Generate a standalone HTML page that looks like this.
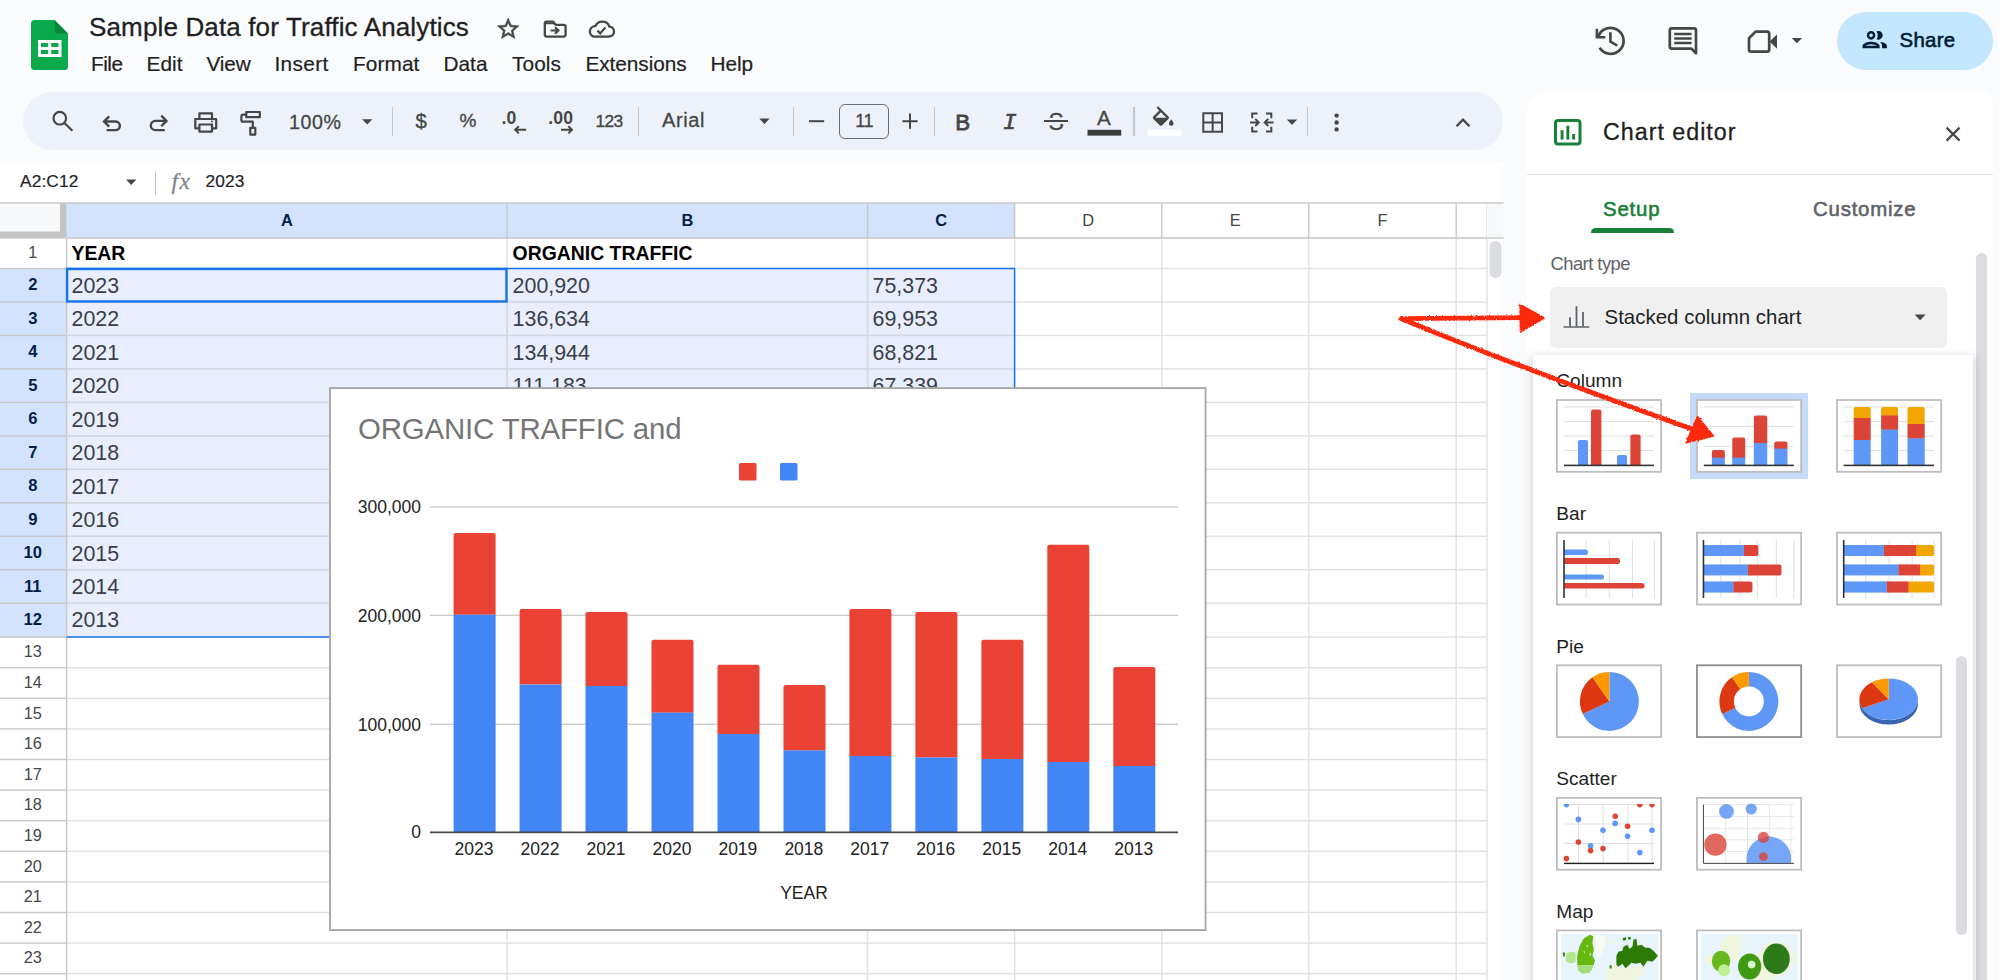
<!DOCTYPE html><html><head><meta charset="utf-8"><title>Sample Data for Traffic Analytics</title><style>
*{box-sizing:border-box;margin:0;padding:0}
html,body{width:1999px;height:980px;overflow:hidden;background:#f9fbfd;font-family:"Liberation Sans",sans-serif}
.a{position:absolute}
.t{position:absolute;white-space:nowrap;line-height:40px}
svg{position:absolute;overflow:visible}
#root{position:relative;width:1999px;height:980px;overflow:hidden}
</style></head><body><div id="root">
<svg style="left:31px;top:20px" width="37" height="50" viewBox="0 0 37 50">
<path d="M3.5 0H23.5L37 13.5V46.5Q37 50 33.5 50H3.5Q0 50 0 46.5V3.5Q0 0 3.5 0Z" fill="#0aa94c"/>
<path d="M23.5 0L37 13.5H27Q23.5 13.5 23.5 10Z" fill="#07883c"/>
<path d="M7 20H30.5V37H7Z M10 23V27H17.2V23Z M20.2 23V27H27.5V23Z M10 30V34H17.2V30Z M20.2 30V34H27.5V30Z" fill="#fff" fill-rule="evenodd"/>
</svg>
<span class="t" style="left:89.00px;top:7px;font-size:26px;color:#1f1f1f;-webkit-text-stroke:0.3px #1f1f1f;letter-spacing:0.144px;">Sample Data for Traffic Analytics</span>
<span class="t" style="left:91.00px;top:44px;font-size:20.8px;color:#1f1f1f;-webkit-text-stroke:0.2px #1f1f1f;letter-spacing:-0.504px;">File</span>
<span class="t" style="left:146.50px;top:44px;font-size:20.8px;color:#1f1f1f;-webkit-text-stroke:0.2px #1f1f1f;letter-spacing:0.040px;">Edit</span>
<span class="t" style="left:206.50px;top:44px;font-size:20.8px;color:#1f1f1f;-webkit-text-stroke:0.2px #1f1f1f;letter-spacing:-0.177px;">View</span>
<span class="t" style="left:274.50px;top:44px;font-size:20.8px;color:#1f1f1f;-webkit-text-stroke:0.2px #1f1f1f;letter-spacing:0.330px;">Insert</span>
<span class="t" style="left:353.00px;top:44px;font-size:20.8px;color:#1f1f1f;-webkit-text-stroke:0.2px #1f1f1f;letter-spacing:0.104px;">Format</span>
<span class="t" style="left:443.50px;top:44px;font-size:20.8px;color:#1f1f1f;-webkit-text-stroke:0.2px #1f1f1f;letter-spacing:0.016px;">Data</span>
<span class="t" style="left:512.00px;top:44px;font-size:20.8px;color:#1f1f1f;-webkit-text-stroke:0.2px #1f1f1f;letter-spacing:0.089px;">Tools</span>
<span class="t" style="left:585.50px;top:44px;font-size:20.8px;color:#1f1f1f;-webkit-text-stroke:0.2px #1f1f1f;letter-spacing:-0.075px;">Extensions</span>
<span class="t" style="left:710.50px;top:44px;font-size:20.8px;color:#1f1f1f;-webkit-text-stroke:0.2px #1f1f1f;letter-spacing:-0.070px;">Help</span>
<div class="a" style="left:23px;top:92px;width:1480px;height:58px;background:#edf2fa;border-radius:29px;"></div>
<div class="a" style="left:391.8px;top:107px;width:1.4px;height:28.5px;background:#c7c7c7;"></div>
<div class="a" style="left:637.8px;top:107px;width:1.4px;height:28.5px;background:#c7c7c7;"></div>
<div class="a" style="left:792.8px;top:107px;width:1.4px;height:28.5px;background:#c7c7c7;"></div>
<div class="a" style="left:933.8px;top:107px;width:1.4px;height:28.5px;background:#c7c7c7;"></div>
<div class="a" style="left:1133.3px;top:107px;width:1.4px;height:28.5px;background:#c7c7c7;"></div>
<div class="a" style="left:1306.8px;top:107px;width:1.4px;height:28.5px;background:#c7c7c7;"></div>
<span class="t" style="left:289.00px;top:102px;font-size:19.6px;color:#444746;-webkit-text-stroke:0.3px #444746;letter-spacing:0.593px;">100%</span>
<span class="t" style="left:662.00px;top:100px;font-size:20px;color:#444746;-webkit-text-stroke:0.3px #444746;letter-spacing:0.598px;">Arial</span>
<span class="t" style="left:595.50px;top:101px;font-size:17.4px;color:#444746;-webkit-text-stroke:0.35px #444746;letter-spacing:-0.677px;">123</span>
<div class="a" style="left:839px;top:103.5px;width:49.5px;height:35px;background:transparent;border:1.6px solid #6b6e6c;border-radius:6px;"></div>
<span class="t" style="left:855.30px;top:101px;font-size:18px;color:#444746;-webkit-text-stroke:0.3px #444746;letter-spacing:-0.543px;">11</span>
<div class="a" style="left:0px;top:161.5px;width:1503px;height:42px;background:#fff;"></div>
<span class="t" style="left:20.00px;top:161px;font-size:17.3px;color:#1f1f1f;-webkit-text-stroke:0.2px #1f1f1f;letter-spacing:0.133px;">A2:C12</span>
<div class="a" style="left:154.6px;top:171px;width:1.4px;height:23.5px;background:#c7c7c7;"></div>
<span class="t" style="left:171.50px;top:161px;font-size:23.5px;color:#80868b;font-style:italic;font-family:'Liberation Serif',serif;-webkit-text-stroke:0.3px #80868b;letter-spacing:1.520px;">fx</span>
<span class="t" style="left:205.50px;top:161px;font-size:17.3px;color:#1f1f1f;-webkit-text-stroke:0.2px #1f1f1f;letter-spacing:0.128px;">2023</span>
<svg style="left:0;top:0" width="1999" height="980" viewBox="0 0 1999 980"><rect x="0.00" y="203.00" width="1503.00" height="777.00" fill="#fff"/><rect x="66.60" y="203.00" width="948.00" height="35.00" fill="#d3e3fd"/><rect x="0.00" y="268.50" width="66.60" height="368.60" fill="#d3e3fd"/><rect x="66.60" y="268.50" width="948.00" height="368.60" fill="#e8eefc"/><rect x="0.00" y="203.00" width="60.00" height="28.50" fill="#f8f9fa"/><rect x="60.00" y="203.00" width="6.60" height="35.00" fill="#c4c4c4"/><rect x="0.00" y="231.50" width="66.60" height="6.50" fill="#c4c4c4"/><rect x="66.60" y="237.30" width="1420.40" height="1.40" fill="#e1e1e1"/><rect x="0.00" y="237.30" width="66.60" height="1.40" fill="#c6c8c8"/><rect x="66.60" y="267.80" width="1420.40" height="1.40" fill="#e1e1e1"/><rect x="0.00" y="267.80" width="66.60" height="1.40" fill="#c6c8c8"/><rect x="66.60" y="301.27" width="1420.40" height="1.40" fill="#e1e1e1"/><rect x="0.00" y="301.27" width="66.60" height="1.40" fill="#c6c8c8"/><rect x="66.60" y="334.74" width="1420.40" height="1.40" fill="#e1e1e1"/><rect x="0.00" y="334.74" width="66.60" height="1.40" fill="#c6c8c8"/><rect x="66.60" y="368.21" width="1420.40" height="1.40" fill="#e1e1e1"/><rect x="0.00" y="368.21" width="66.60" height="1.40" fill="#c6c8c8"/><rect x="66.60" y="401.68" width="1420.40" height="1.40" fill="#e1e1e1"/><rect x="0.00" y="401.68" width="66.60" height="1.40" fill="#c6c8c8"/><rect x="66.60" y="435.15" width="1420.40" height="1.40" fill="#e1e1e1"/><rect x="0.00" y="435.15" width="66.60" height="1.40" fill="#c6c8c8"/><rect x="66.60" y="468.62" width="1420.40" height="1.40" fill="#e1e1e1"/><rect x="0.00" y="468.62" width="66.60" height="1.40" fill="#c6c8c8"/><rect x="66.60" y="502.09" width="1420.40" height="1.40" fill="#e1e1e1"/><rect x="0.00" y="502.09" width="66.60" height="1.40" fill="#c6c8c8"/><rect x="66.60" y="535.56" width="1420.40" height="1.40" fill="#e1e1e1"/><rect x="0.00" y="535.56" width="66.60" height="1.40" fill="#c6c8c8"/><rect x="66.60" y="569.03" width="1420.40" height="1.40" fill="#e1e1e1"/><rect x="0.00" y="569.03" width="66.60" height="1.40" fill="#c6c8c8"/><rect x="66.60" y="602.50" width="1420.40" height="1.40" fill="#e1e1e1"/><rect x="0.00" y="602.50" width="66.60" height="1.40" fill="#c6c8c8"/><rect x="66.60" y="636.40" width="1420.40" height="1.40" fill="#e1e1e1"/><rect x="0.00" y="636.40" width="66.60" height="1.40" fill="#c6c8c8"/><rect x="66.60" y="667.00" width="1420.40" height="1.40" fill="#e1e1e1"/><rect x="0.00" y="667.00" width="66.60" height="1.40" fill="#c6c8c8"/><rect x="66.60" y="697.60" width="1420.40" height="1.40" fill="#e1e1e1"/><rect x="0.00" y="697.60" width="66.60" height="1.40" fill="#c6c8c8"/><rect x="66.60" y="728.20" width="1420.40" height="1.40" fill="#e1e1e1"/><rect x="0.00" y="728.20" width="66.60" height="1.40" fill="#c6c8c8"/><rect x="66.60" y="758.80" width="1420.40" height="1.40" fill="#e1e1e1"/><rect x="0.00" y="758.80" width="66.60" height="1.40" fill="#c6c8c8"/><rect x="66.60" y="789.40" width="1420.40" height="1.40" fill="#e1e1e1"/><rect x="0.00" y="789.40" width="66.60" height="1.40" fill="#c6c8c8"/><rect x="66.60" y="820.00" width="1420.40" height="1.40" fill="#e1e1e1"/><rect x="0.00" y="820.00" width="66.60" height="1.40" fill="#c6c8c8"/><rect x="66.60" y="850.60" width="1420.40" height="1.40" fill="#e1e1e1"/><rect x="0.00" y="850.60" width="66.60" height="1.40" fill="#c6c8c8"/><rect x="66.60" y="881.20" width="1420.40" height="1.40" fill="#e1e1e1"/><rect x="0.00" y="881.20" width="66.60" height="1.40" fill="#c6c8c8"/><rect x="66.60" y="911.80" width="1420.40" height="1.40" fill="#e1e1e1"/><rect x="0.00" y="911.80" width="66.60" height="1.40" fill="#c6c8c8"/><rect x="66.60" y="942.40" width="1420.40" height="1.40" fill="#e1e1e1"/><rect x="0.00" y="942.40" width="66.60" height="1.40" fill="#c6c8c8"/><rect x="66.60" y="973.00" width="1420.40" height="1.40" fill="#e1e1e1"/><rect x="0.00" y="973.00" width="66.60" height="1.40" fill="#c6c8c8"/><rect x="66.60" y="1003.60" width="1420.40" height="1.40" fill="#e1e1e1"/><rect x="0.00" y="1003.60" width="66.60" height="1.40" fill="#c6c8c8"/><rect x="506.30" y="238.00" width="1.40" height="742.00" fill="#e1e1e1"/><rect x="506.30" y="203.00" width="1.40" height="35.00" fill="#c6c8c8"/><rect x="866.90" y="238.00" width="1.40" height="742.00" fill="#e1e1e1"/><rect x="866.90" y="203.00" width="1.40" height="35.00" fill="#c6c8c8"/><rect x="1013.90" y="238.00" width="1.40" height="742.00" fill="#e1e1e1"/><rect x="1013.90" y="203.00" width="1.40" height="35.00" fill="#c6c8c8"/><rect x="1161.10" y="238.00" width="1.40" height="742.00" fill="#e1e1e1"/><rect x="1161.10" y="203.00" width="1.40" height="35.00" fill="#c6c8c8"/><rect x="1308.10" y="238.00" width="1.40" height="742.00" fill="#e1e1e1"/><rect x="1308.10" y="203.00" width="1.40" height="35.00" fill="#c6c8c8"/><rect x="1455.50" y="238.00" width="1.40" height="742.00" fill="#e1e1e1"/><rect x="1455.50" y="203.00" width="1.40" height="35.00" fill="#c6c8c8"/><rect x="65.90" y="238.00" width="1.40" height="742.00" fill="#c6c8c8"/><rect x="1486.30" y="203.00" width="1.40" height="777.00" fill="#e1e1e1"/><rect x="1487.00" y="203.00" width="16.50" height="35.00" fill="#f8f9fa"/><rect x="0.00" y="202.30" width="1503.50" height="1.40" fill="#c6c8c8"/><rect x="66.60" y="237.30" width="1436.90" height="1.40" fill="#c6c8c8"/><rect x="66.60" y="301.27" width="948.00" height="1.40" fill="#d3d7e3"/><rect x="66.60" y="334.74" width="948.00" height="1.40" fill="#d3d7e3"/><rect x="66.60" y="368.21" width="948.00" height="1.40" fill="#d3d7e3"/><rect x="66.60" y="401.68" width="948.00" height="1.40" fill="#d3d7e3"/><rect x="66.60" y="435.15" width="948.00" height="1.40" fill="#d3d7e3"/><rect x="66.60" y="468.62" width="948.00" height="1.40" fill="#d3d7e3"/><rect x="66.60" y="502.09" width="948.00" height="1.40" fill="#d3d7e3"/><rect x="66.60" y="535.56" width="948.00" height="1.40" fill="#d3d7e3"/><rect x="66.60" y="569.03" width="948.00" height="1.40" fill="#d3d7e3"/><rect x="66.60" y="602.50" width="948.00" height="1.40" fill="#d3d7e3"/><rect x="506.30" y="268.50" width="1.40" height="368.60" fill="#d3d7e3"/><rect x="866.90" y="268.50" width="1.40" height="368.60" fill="#d3d7e3"/><path d="M66.6 268.5H1014.6V637.10H66.6" fill="none" stroke="#1a73e8" stroke-width="1.5"/><rect x="67.1" y="269.0" width="439.40" height="32.47" fill="none" stroke="#1a73e8" stroke-width="2.4"/><rect x="1489.5" y="241" width="12" height="37" rx="6" fill="#dadce0"/></svg>
<span class="t" style="left:280.88px;top:200px;font-size:16.4px;color:#041e49;font-weight:700;">A</span>
<span class="t" style="left:681.38px;top:200px;font-size:16.4px;color:#041e49;font-weight:700;">B</span>
<span class="t" style="left:935.18px;top:200px;font-size:16.4px;color:#041e49;font-weight:700;">C</span>
<span class="t" style="left:1082.28px;top:200px;font-size:16.4px;color:#444746;">D</span>
<span class="t" style="left:1229.83px;top:200px;font-size:16.4px;color:#444746;">E</span>
<span class="t" style="left:1377.49px;top:200px;font-size:16.4px;color:#444746;">F</span>
<span class="t" style="left:28.27px;top:232px;font-size:16.3px;color:#444746;">1</span>
<span class="t" style="left:28.18px;top:265px;font-size:16.6px;color:#041e49;font-weight:700;">2</span>
<span class="t" style="left:28.18px;top:299px;font-size:16.6px;color:#041e49;font-weight:700;">3</span>
<span class="t" style="left:28.18px;top:332px;font-size:16.6px;color:#041e49;font-weight:700;">4</span>
<span class="t" style="left:28.18px;top:366px;font-size:16.6px;color:#041e49;font-weight:700;">5</span>
<span class="t" style="left:28.18px;top:399px;font-size:16.6px;color:#041e49;font-weight:700;">6</span>
<span class="t" style="left:28.18px;top:433px;font-size:16.6px;color:#041e49;font-weight:700;">7</span>
<span class="t" style="left:28.18px;top:466px;font-size:16.6px;color:#041e49;font-weight:700;">8</span>
<span class="t" style="left:28.18px;top:500px;font-size:16.6px;color:#041e49;font-weight:700;">9</span>
<span class="t" style="left:23.57px;top:533px;font-size:16.6px;color:#041e49;font-weight:700;">10</span>
<span class="t" style="left:24.03px;top:567px;font-size:16.6px;color:#041e49;font-weight:700;">11</span>
<span class="t" style="left:23.57px;top:600px;font-size:16.6px;color:#041e49;font-weight:700;">12</span>
<span class="t" style="left:23.73px;top:631px;font-size:16.3px;color:#444746;">13</span>
<span class="t" style="left:23.73px;top:662px;font-size:16.3px;color:#444746;">14</span>
<span class="t" style="left:23.73px;top:693px;font-size:16.3px;color:#444746;">15</span>
<span class="t" style="left:23.73px;top:723px;font-size:16.3px;color:#444746;">16</span>
<span class="t" style="left:23.73px;top:754px;font-size:16.3px;color:#444746;">17</span>
<span class="t" style="left:23.73px;top:784px;font-size:16.3px;color:#444746;">18</span>
<span class="t" style="left:23.73px;top:815px;font-size:16.3px;color:#444746;">19</span>
<span class="t" style="left:23.73px;top:846px;font-size:16.3px;color:#444746;">20</span>
<span class="t" style="left:23.73px;top:876px;font-size:16.3px;color:#444746;">21</span>
<span class="t" style="left:23.73px;top:907px;font-size:16.3px;color:#444746;">22</span>
<span class="t" style="left:23.73px;top:937px;font-size:16.3px;color:#444746;">23</span>
<span class="t" style="left:71.50px;top:233px;font-size:19.4px;color:#000;font-weight:700;">YEAR</span>
<span class="t" style="left:512.60px;top:233px;font-size:19.4px;color:#000;font-weight:700;">ORGANIC TRAFFIC</span>
<span class="t" style="left:71.50px;top:266px;font-size:21.4px;color:#3a3f4a;">2023</span>
<span class="t" style="left:512.60px;top:266px;font-size:21.4px;color:#3a3f4a;">200,920</span>
<span class="t" style="left:872.50px;top:266px;font-size:21.4px;color:#3a3f4a;">75,373</span>
<span class="t" style="left:71.50px;top:299px;font-size:21.4px;color:#3a3f4a;">2022</span>
<span class="t" style="left:512.60px;top:299px;font-size:21.4px;color:#3a3f4a;">136,634</span>
<span class="t" style="left:872.50px;top:299px;font-size:21.4px;color:#3a3f4a;">69,953</span>
<span class="t" style="left:71.50px;top:333px;font-size:21.4px;color:#3a3f4a;">2021</span>
<span class="t" style="left:512.60px;top:333px;font-size:21.4px;color:#3a3f4a;">134,944</span>
<span class="t" style="left:872.50px;top:333px;font-size:21.4px;color:#3a3f4a;">68,821</span>
<span class="t" style="left:71.50px;top:366px;font-size:21.4px;color:#3a3f4a;">2020</span>
<span class="t" style="left:512.60px;top:366px;font-size:21.4px;color:#3a3f4a;">111,183</span>
<span class="t" style="left:872.50px;top:366px;font-size:21.4px;color:#3a3f4a;">67,339</span>
<span class="t" style="left:71.50px;top:400px;font-size:21.4px;color:#3a3f4a;">2019</span>
<span class="t" style="left:71.50px;top:433px;font-size:21.4px;color:#3a3f4a;">2018</span>
<span class="t" style="left:71.50px;top:467px;font-size:21.4px;color:#3a3f4a;">2017</span>
<span class="t" style="left:71.50px;top:500px;font-size:21.4px;color:#3a3f4a;">2016</span>
<span class="t" style="left:71.50px;top:534px;font-size:21.4px;color:#3a3f4a;">2015</span>
<span class="t" style="left:71.50px;top:567px;font-size:21.4px;color:#3a3f4a;">2014</span>
<span class="t" style="left:71.50px;top:600px;font-size:21.4px;color:#3a3f4a;">2013</span>
<svg style="left:0;top:0" width="1999" height="980" viewBox="0 0 1999 980"><rect x="330.02" y="388.12" width="875.55" height="541.95" fill="#fff" stroke="#a6a6a6" stroke-width="1.85"/><rect x="430" y="506.3" width="748" height="1.4" fill="#cccccc"/><rect x="430" y="614.5999999999999" width="748" height="1.4" fill="#cccccc"/><rect x="430" y="723.5999999999999" width="748" height="1.4" fill="#cccccc"/><path d="M453.6 614.7V535.0Q453.6 533.0 455.6 533.0H493.6Q495.6 533.0 495.6 535.0V614.7Z" fill="#ea4335"/><rect x="453.6" y="614.7" width="42" height="217.3" fill="#4285f4"/><path d="M519.6 684.6V611.0Q519.6 609.0 521.6 609.0H559.6Q561.6 609.0 561.6 611.0V684.6Z" fill="#ea4335"/><rect x="519.6" y="684.6" width="42" height="147.4" fill="#4285f4"/><path d="M585.5 686.0V614.0Q585.5 612.0 587.5 612.0H625.5Q627.5 612.0 627.5 614.0V686.0Z" fill="#ea4335"/><rect x="585.5" y="686.0" width="42" height="146.0" fill="#4285f4"/><path d="M651.5 712.7V641.7Q651.5 639.7 653.5 639.7H691.5Q693.5 639.7 693.5 641.7V712.7Z" fill="#ea4335"/><rect x="651.5" y="712.7" width="42" height="119.3" fill="#4285f4"/><path d="M717.5 734.0V666.7Q717.5 664.7 719.5 664.7H757.5Q759.5 664.7 759.5 666.7V734.0Z" fill="#ea4335"/><rect x="717.5" y="734.0" width="42" height="98.0" fill="#4285f4"/><path d="M783.5 750.4V687.0Q783.5 685.0 785.5 685.0H823.5Q825.5 685.0 825.5 687.0V750.4Z" fill="#ea4335"/><rect x="783.5" y="750.4" width="42" height="81.6" fill="#4285f4"/><path d="M849.4 756.0V611.0Q849.4 609.0 851.4 609.0H889.4Q891.4 609.0 891.4 611.0V756.0Z" fill="#ea4335"/><rect x="849.4" y="756.0" width="42" height="76.0" fill="#4285f4"/><path d="M915.4 757.5V614.0Q915.4 612.0 917.4 612.0H955.4Q957.4 612.0 957.4 614.0V757.5Z" fill="#ea4335"/><rect x="915.4" y="757.5" width="42" height="74.5" fill="#4285f4"/><path d="M981.4 759.0V641.7Q981.4 639.7 983.4 639.7H1021.4Q1023.4 639.7 1023.4 641.7V759.0Z" fill="#ea4335"/><rect x="981.4" y="759.0" width="42" height="73.0" fill="#4285f4"/><path d="M1047.3 762.0V546.8Q1047.3 544.8 1049.3 544.8H1087.3Q1089.3 544.8 1089.3 546.8V762.0Z" fill="#ea4335"/><rect x="1047.3" y="762.0" width="42" height="70.0" fill="#4285f4"/><path d="M1113.3 766.0V669.0Q1113.3 667.0 1115.3 667.0H1153.3Q1155.3 667.0 1155.3 669.0V766.0Z" fill="#ea4335"/><rect x="1113.3" y="766.0" width="42" height="66.0" fill="#4285f4"/><rect x="430" y="831.500" width="748" height="1.700" fill="#444"/><rect x="739" y="463" width="17.5" height="17.5" rx="1.5" fill="#ea4335"/><rect x="780" y="463" width="17.5" height="17.5" rx="1.5" fill="#4285f4"/></svg>
<span class="t" style="left:358.00px;top:409px;font-size:29.4px;color:#757575;letter-spacing:-0.141px;">ORGANIC TRAFFIC and</span>
<span class="t" style="left:357.74px;top:487px;font-size:17.5px;color:#222;">300,000</span>
<span class="t" style="left:357.74px;top:596px;font-size:17.5px;color:#222;">200,000</span>
<span class="t" style="left:357.74px;top:705px;font-size:17.5px;color:#222;">100,000</span>
<span class="t" style="left:411.27px;top:812px;font-size:17.5px;color:#222;">0</span>
<span class="t" style="left:454.53px;top:829px;font-size:17.5px;color:#222;">2023</span>
<span class="t" style="left:520.50px;top:829px;font-size:17.5px;color:#222;">2022</span>
<span class="t" style="left:586.47px;top:829px;font-size:17.5px;color:#222;">2021</span>
<span class="t" style="left:652.44px;top:829px;font-size:17.5px;color:#222;">2020</span>
<span class="t" style="left:718.41px;top:829px;font-size:17.5px;color:#222;">2019</span>
<span class="t" style="left:784.38px;top:829px;font-size:17.5px;color:#222;">2018</span>
<span class="t" style="left:850.35px;top:829px;font-size:17.5px;color:#222;">2017</span>
<span class="t" style="left:916.32px;top:829px;font-size:17.5px;color:#222;">2016</span>
<span class="t" style="left:982.29px;top:829px;font-size:17.5px;color:#222;">2015</span>
<span class="t" style="left:1048.26px;top:829px;font-size:17.5px;color:#222;">2014</span>
<span class="t" style="left:1114.23px;top:829px;font-size:17.5px;color:#222;">2013</span>
<span class="t" style="left:780.17px;top:873px;font-size:17.5px;color:#222;">YEAR</span>
<div class="a" style="left:1836.5px;top:11.5px;width:156.5px;height:58px;background:#c2e7ff;border-radius:29px;"></div>
<span class="t" style="left:1899.50px;top:20px;font-size:20.4px;color:#001d35;-webkit-text-stroke:0.6px #001d35;letter-spacing:0.313px;">Share</span>
<div class="a" style="left:1527px;top:92px;width:466px;height:900px;background:#fff;border-radius:24px 12px 0 0;"></div>
<span class="t" style="left:1603.00px;top:112px;font-size:23.3px;color:#1f1f1f;-webkit-text-stroke:0.3px #1f1f1f;letter-spacing:0.980px;">Chart editor</span>
<div class="a" style="left:1527px;top:173.5px;width:466px;height:1.5px;background:#e3e3e3;"></div>
<span class="t" style="left:1603.00px;top:189px;font-size:20.4px;color:#188038;-webkit-text-stroke:0.6px #188038;letter-spacing:0.838px;">Setup</span>
<div class="a" style="left:1591px;top:228.3px;width:82.5px;height:4.7px;background:#188038;border-radius:4.5px 4.5px 0 0;"></div>
<span class="t" style="left:1813.00px;top:189px;font-size:20.4px;color:#5f6368;-webkit-text-stroke:0.6px #5f6368;letter-spacing:0.793px;">Customize</span>
<span class="t" style="left:1550.50px;top:244px;font-size:18.4px;color:#5f6368;letter-spacing:-0.538px;">Chart type</span>
<div class="a" style="left:1550px;top:287px;width:396.5px;height:61px;background:#f0f0f0;border-radius:6px;"></div>
<span class="t" style="left:1604.50px;top:297px;font-size:20.4px;color:#1f1f1f;letter-spacing:0.042px;">Stacked column chart</span>
<div class="a" style="left:1976px;top:252.5px;width:11px;height:740px;background:#dadce0;border-radius:6px;"></div>
<div class="a" style="left:1532.5px;top:355px;width:440px;height:640px;background:#fff;box-shadow:0 3px 9px 1px rgba(0,0,0,0.2);"></div>
<span class="t" style="left:1556.30px;top:361px;font-size:19.1px;color:#1f1f1f;">Column</span>
<span class="t" style="left:1556.30px;top:494px;font-size:19.1px;color:#1f1f1f;">Bar</span>
<span class="t" style="left:1556.30px;top:627px;font-size:19.1px;color:#1f1f1f;">Pie</span>
<span class="t" style="left:1556.30px;top:759px;font-size:19.1px;color:#1f1f1f;">Scatter</span>
<span class="t" style="left:1556.30px;top:892px;font-size:19.1px;color:#1f1f1f;">Map</span>
<div class="a" style="left:1690px;top:393.3px;width:118px;height:85.4px;background:#c6dafc;"></div>
<div class="a" style="left:1955.5px;top:656px;width:11.5px;height:279px;background:#dadce0;border-radius:6px;"></div>
<svg style="left:0;top:0" width="1999" height="980" viewBox="0 0 1999 980" fill="none" stroke-linecap="butt" stroke-linejoin="miter"><g stroke="#444746" stroke-width="2.3" stroke-linejoin="miter"><path transform="translate(495.24,15.84) scale(1.08)" stroke="#444746" stroke-width="0.5" fill="#444746" d="M22 9.24l-7.19-.62L12 2 9.19 8.63 2 9.24l5.46 4.73L5.82 21 12 17.27 18.18 21l-1.63-7.03L22 9.24zM12 15.4l-3.76 2.27 1-4.28-3.32-2.88 4.38-.38L12 6.1l1.71 4.04 4.38.38-3.32 2.88 1 4.28L12 15.4z"/><path d="M546.8 21.6H553L555.600 24.800H563.600Q565.600 24.800 565.600 26.800V34.600Q565.600 36.600 563.600 36.600H546.800Q544.800 36.600 544.800 34.600V23.600Q544.800 21.600 546.800 21.600Z" stroke-linejoin="round"/><path d="M544.800 24.300V22.500H553.500L555 24.300Z" fill="#444746" stroke="none"/><path d="M550.600 30.500H557.500M555 27.300L558.400 30.500L555 33.700" stroke-width="2.200"/><path stroke-linejoin="round" d="M595 36.600H608.500C611.800 36.600 614 34.400 614 31.600C614 28.900 612 26.800 609.300 26.600C608.500 23.600 605.700 21.600 602.300 21.600C599.300 21.600 596.700 23.200 595.600 25.800C592.500 26.100 589.900 28.400 589.900 31.400C589.900 34.300 592.200 36.600 595 36.600Z"/><path d="M597.300 30.600L600.200 33.400L605.400 27.400" stroke-width="2.200"/></g><g stroke="#444746" stroke-width="2.2"><circle cx="59.8" cy="118.2" r="6.3"/><path d="M64.4 123L72.4 130.800"/><path d="M109.2 116.3L104 121.5L109.200 126.700M104.500 121.500H115.600A4.300 4.300 0 0 1 115.600 130.100H106.600" stroke-width="2.400"/><path d="M161.300 115.700L166.500 120.900L161.300 126.100M166 120.900H155.400A4.600 4.600 0 0 0 155.400 130.100H164.800" stroke-width="2.400"/><path d="M199.400 118.500V113.400H212V118.500M199.400 128.300H195.300V119H216.200V128.300H212M199.400 124.500H212V131.600H199.400Z" stroke-linejoin="round"/><path d="M246.300 112H259.800V117.200H246.300ZM246.300 114.600H243.200Q241.400 114.600 241.400 116.400V119.900Q241.400 121.700 243.200 121.700H252.800V127.600M250.300 127.900H255.300V134.600H250.300Z" stroke-linejoin="round"/></g><circle cx="212" cy="121.500" r="1" fill="#444746"/><path d="M362 119.2H372.4L367.2 124.60000000000001Z" fill="#444746"/><path d="M759.3 118.6H769.6999999999999L764.5 124.0Z" fill="#444746"/><path d="M1286.8 119.5H1297.2L1292.0 124.9Z" fill="#444746"/><path d="M126 179.6H136.4L131.2 185.0Z" fill="#444746"/><path d="M1791.7 37.9H1802.1000000000001L1796.9 43.3Z" fill="#444746"/><path d="M1914.6 314.5H1925.6L1920.1 320.3Z" fill="#444746"/><g stroke="#444746" stroke-width="2"><path d="M526.200 129.800H515.500M518.800 126.200L515.200 129.800L518.800 133.400"/><path d="M561 129.800H571.700M568.400 126.200L572 129.800L568.400 133.400"/><path d="M809 121.200H824.200"/><path d="M902.400 121.200H917.600M910 113.600V128.800"/><path d="M1203.300 113.300H1222V131.700H1203.300ZM1212.650 113.300V131.700M1203.300 122.500H1222"/><path d="M1257.500 113.400H1252.200V118.300M1252.200 126.800V131.600H1257.500M1266 113.400H1271.300V118.300M1271.300 126.800V131.600H1266M1250 122.500H1258.500M1255.200 118.900L1258.800 122.500L1255.200 126.100M1273.500 122.500H1265M1268.300 118.900L1264.700 122.500L1268.300 126.100"/><path d="M1456.500 126.200L1463 119.700L1469.500 126.200" stroke-width="2.300"/></g><circle cx="1336.600" cy="115.6" r="2.200" fill="#444746"/><circle cx="1336.600" cy="122.5" r="2.200" fill="#444746"/><circle cx="1336.600" cy="129.4" r="2.200" fill="#444746"/><rect x="1087.500" y="129.800" width="33.700" height="5.800" fill="#3c3c3c"/><rect x="1147.500" y="129.800" width="33.700" height="5.800" fill="#fff"/><g transform="translate(1149.400,106.200) scale(1.150)" fill="#444746"><path d="M16.560 8.940L7.620 0 6.210 1.410l2.380 2.380-5.150 5.150c-.59.59-.59 1.540 0 2.120l5.500 5.500c.29.29.68.44 1.060.44s.77-.15 1.060-.44l5.500-5.500c.59-.58.59-1.530 0-2.120zM5.210 10L10 5.210 14.790 10H5.210zM19 11.500s-2 2.170-2 3.500c0 1.100.9 2 2 2s2-.9 2-2c0-1.330-2-3.500-2-3.500z"/></g><g stroke="#444746" stroke-width="2.700"><path d="M1598.300 36.600A13 13 0 1 1 1599.600 47.800"/><path d="M1610.400 32.300V41.500L1617.300 45.600" stroke-width="2.600"/><path d="M1696 53.200V30.400Q1696 28.400 1694 28.400H1671.800Q1669.800 28.400 1669.800 30.400V46.600Q1669.800 48.600 1671.800 48.600H1691.400Z" stroke-linejoin="round"/><path d="M1674.200 34H1691.600M1674.200 38.500H1691.600M1674.200 43H1691.600" stroke-width="2.500"/><path d="M1755.600 31.600H1767Q1769.200 31.600 1769.200 33.800V49.400Q1769.200 51.600 1767 51.600H1751.200Q1749 51.600 1749 49.400V38.200Z" stroke-linejoin="round"/></g><path d="M1597.600 38.500" fill="#444746"/><path d="M1596.900 28.800V37.300H1605.300" stroke="#444746" stroke-width="2.600" fill="none"/><path d="M1769.500 41.600L1777 34.400V48.800Z" fill="#444746"/><g transform="translate(1860.100,25) scale(1.220)" fill="#001d35"><path d="M9 13.750c-2.340 0-7 1.170-7 3.500V19h14v-1.750c0-2.330-4.660-3.500-7-3.500zM4.340 17c.84-.58 2.870-1.250 4.660-1.250s3.820.67 4.660 1.250H4.340zM9 12c1.930 0 3.500-1.570 3.500-3.500S10.930 5 9 5 5.500 6.570 5.500 8.500 7.070 12 9 12zm0-5c.83 0 1.500.67 1.500 1.500S9.830 10 9 10s-1.500-.67-1.500-1.500S8.170 7 9 7zm7.040 6.810c1.160.84 1.960 1.960 1.960 3.440V19h4v-1.750c0-2.020-3.500-3.170-5.960-3.440zM15 12c1.930 0 3.500-1.570 3.500-3.500S16.930 5 15 5c-.54 0-1.040.13-1.500.35.630.89 1 1.980 1 3.150s-.37 2.260-1 3.150c.46.22.96.35 1.500.35z"/></g><rect x="1555.500" y="120.500" width="24.500" height="23.400" rx="2.500" stroke="#188038" stroke-width="3"/><rect x="1560.6" y="130.2" width="2.900" height="9.4" fill="#188038"/><rect x="1566.4" y="125.7" width="2.900" height="13.9" fill="#188038"/><rect x="1572.2" y="134" width="2.900" height="5.6" fill="#188038"/><path d="M1946.600 127.600L1959.600 140.600M1959.600 127.600L1946.600 140.600" stroke="#444746" stroke-width="2.200"/><path d="M1563.600 327H1589.300" stroke="#5f6368" stroke-width="1.500"/><path d="M1570 326.500V317.200M1576.500 326.500V306.300M1583 326.500V312" stroke="#5f6368" stroke-width="1.800"/></svg>
<span class="t" style="left:415.50px;top:101px;font-size:20.4px;color:#444746;-webkit-text-stroke:0.3px #444746;letter-spacing:1.154px;">$</span>
<span class="t" style="left:459.50px;top:101px;font-size:19px;color:#444746;-webkit-text-stroke:0.3px #444746;letter-spacing:0.606px;">%</span>
<span class="t" style="left:501.50px;top:98px;font-size:17.6px;color:#444746;font-weight:700;letter-spacing:0.161px;">.0</span>
<span class="t" style="left:548.30px;top:98px;font-size:17.6px;color:#444746;font-weight:700;letter-spacing:0.178px;">.00</span>
<span class="t" style="left:955.30px;top:103px;font-size:22.4px;color:#444746;-webkit-text-stroke:0.8px #444746;">B</span>
<span class="t" style="left:1097.10px;top:98px;font-size:20.6px;color:#444746;-webkit-text-stroke:0.3px #444746;">A</span>
<span class="t" style="left:1003px;top:103px;font-family:'Liberation Mono',monospace;font-style:italic;font-size:22.6px;color:#444746;-webkit-text-stroke:0.7px #444746">I</span>
<span class="t" style="left:1048.6px;top:102px;font-size:23px;color:#444746;-webkit-text-stroke:0.3px #444746">S</span>
<div class="a" style="left:1048px;top:118.4px;width:17px;height:5.4px;background:#edf2fa;"></div>
<div class="a" style="left:1044.4px;top:119.9px;width:23.4px;height:2.3px;background:#444746;"></div>
<svg style="left:0;top:0" width="1999" height="980" viewBox="0 0 1999 980"><rect x="1556.90" y="400.00" width="104.2" height="71.8" fill="#fff" stroke="#bdbdbd" stroke-width="1.8"/><rect x="1696.95" y="400.00" width="104.2" height="71.8" fill="#fff" stroke="#bdbdbd" stroke-width="1.8"/><rect x="1837.00" y="400.00" width="104.2" height="71.8" fill="#fff" stroke="#bdbdbd" stroke-width="1.8"/><rect x="1556.90" y="532.70" width="104.2" height="71.8" fill="#fff" stroke="#bdbdbd" stroke-width="1.8"/><rect x="1696.95" y="532.70" width="104.2" height="71.8" fill="#fff" stroke="#bdbdbd" stroke-width="1.8"/><rect x="1837.00" y="532.70" width="104.2" height="71.8" fill="#fff" stroke="#bdbdbd" stroke-width="1.8"/><rect x="1556.90" y="665.30" width="104.2" height="71.8" fill="#fff" stroke="#bdbdbd" stroke-width="1.8"/><rect x="1696.95" y="665.30" width="104.2" height="71.8" fill="#fff" stroke="#8e8e8e" stroke-width="1.8"/><rect x="1837.00" y="665.30" width="104.2" height="71.8" fill="#fff" stroke="#bdbdbd" stroke-width="1.8"/><rect x="1556.90" y="797.90" width="104.2" height="71.8" fill="#fff" stroke="#bdbdbd" stroke-width="1.8"/><rect x="1696.95" y="797.90" width="104.2" height="71.8" fill="#fff" stroke="#bdbdbd" stroke-width="1.8"/><rect x="1556.90" y="930.40" width="104.2" height="71.8" fill="#fff" stroke="#bdbdbd" stroke-width="1.8"/><rect x="1696.95" y="930.40" width="104.2" height="71.8" fill="#fff" stroke="#bdbdbd" stroke-width="1.8"/><g transform="translate(1556.40,399.40)"><rect x="7.6" y="7.15" width="90.0" height="0.9" fill="#dcdcdc"/><rect x="7.6" y="21.75" width="90.0" height="0.9" fill="#dcdcdc"/><rect x="7.6" y="36.15" width="90.0" height="0.9" fill="#dcdcdc"/><rect x="7.6" y="50.75" width="90.0" height="0.9" fill="#dcdcdc"/><path d="M21.6 66V42.6Q21.6 40.6 23.6 40.6H29.6Q31.6 40.6 31.6 42.6V66Z" fill="#5e97f6"/><path d="M34.6 66V12Q34.6 10 36.6 10H43Q45 10 45 12V66Z" fill="#db4437"/><path d="M60.6 66V57.6Q60.6 55.6 62.6 55.6H68.6Q70.6 55.6 70.6 57.6V66Z" fill="#5e97f6"/><path d="M74 66V37Q74 35 76 35H82.2Q84.2 35 84.2 37V66Z" fill="#db4437"/><rect x="7.6" y="65.20" width="90.0" height="1.6" fill="#333"/></g><g transform="translate(1696.45,399.40)"><rect x="7.4" y="7.15" width="90.0" height="0.9" fill="#dcdcdc"/><rect x="7.4" y="26.55" width="90.0" height="0.9" fill="#dcdcdc"/><rect x="7.4" y="46.55" width="90.0" height="0.9" fill="#dcdcdc"/><path d="M15.4 58.5V52.6Q15.4 50.6 17.4 50.6H26.4Q28.4 50.6 28.4 52.6V58.5Z" fill="#db4437"/><rect x="15.4" y="58.2" width="13.00" height="7.80" fill="#5e97f6"/><path d="M35.8 58.5V40Q35.8 38 37.8 38H46.8Q48.8 38 48.8 40V58.5Z" fill="#db4437"/><rect x="35.8" y="58.2" width="13.00" height="7.80" fill="#5e97f6"/><path d="M57.4 43.9V18Q57.4 16 59.4 16H68.8Q70.8 16 70.8 18V43.9Z" fill="#db4437"/><rect x="57.4" y="43.6" width="13.40" height="22.40" fill="#5e97f6"/><path d="M77.8 49.5V44Q77.8 42 79.8 42H89Q91 42 91 44V49.5Z" fill="#db4437"/><rect x="77.8" y="49.2" width="13.20" height="16.80" fill="#5e97f6"/><rect x="7.4" y="65.20" width="90.0" height="1.6" fill="#333"/></g><g transform="translate(1836.50,399.40)"><rect x="7.2" y="7.15" width="90.4" height="0.9" fill="#dcdcdc"/><rect x="7.2" y="21.75" width="90.4" height="0.9" fill="#dcdcdc"/><rect x="7.2" y="36.15" width="90.4" height="0.9" fill="#dcdcdc"/><rect x="7.2" y="50.75" width="90.4" height="0.9" fill="#dcdcdc"/><path d="M17.2 18.900000000000002V9.6Q17.2 7.6 19.2 7.6H32.2Q34.2 7.6 34.2 9.6V18.900000000000002Z" fill="#f2a600"/><rect x="17.2" y="18.6" width="17.00" height="22.30" fill="#db4437"/><rect x="17.2" y="40.6" width="17.00" height="25.40" fill="#5e97f6"/><path d="M44.6 16.3V9.6Q44.6 7.6 46.6 7.6H59.6Q61.6 7.6 61.6 9.6V16.3Z" fill="#f2a600"/><rect x="44.6" y="16" width="17.00" height="14.50" fill="#db4437"/><rect x="44.6" y="30.2" width="17.00" height="35.80" fill="#5e97f6"/><path d="M71 24.900000000000002V9.6Q71 7.6 73 7.6H86.2Q88.2 7.6 88.2 9.6V24.900000000000002Z" fill="#f2a600"/><rect x="71" y="24.6" width="17.20" height="14.70" fill="#db4437"/><rect x="71" y="39" width="17.20" height="27.00" fill="#5e97f6"/><rect x="7.2" y="65.20" width="90.4" height="1.6" fill="#333"/></g><g transform="translate(1556.40,532.40)"><rect x="29.15" y="7.6" width="0.9" height="58.0" fill="#dcdcdc"/><rect x="52.35" y="7.6" width="0.9" height="58.0" fill="#dcdcdc"/><rect x="75.55" y="7.6" width="0.9" height="58.0" fill="#dcdcdc"/><rect x="97.55" y="7.6" width="0.9" height="58.0" fill="#dcdcdc"/><path d="M7.6 17.2H29.0Q31.6 17.2 31.6 19.8V20.0Q31.6 22.6 29.0 22.6H7.6Z" fill="#5e97f6"/><path d="M7.6 25.6H60.800000000000004Q63.6 25.6 63.6 28.400000000000002V28.8Q63.6 31.6 60.800000000000004 31.6H7.6Z" fill="#db4437"/><path d="M7.6 42H45.0Q47.6 42 47.6 44.6V44.6Q47.6 47.2 45.0 47.2H7.6Z" fill="#5e97f6"/><path d="M7.6 50.6H85.4Q88.2 50.6 88.2 53.4V53.400000000000006Q88.2 56.2 85.4 56.2H7.6Z" fill="#db4437"/><rect x="6.80" y="7.6" width="1.6" height="58.0" fill="#333"/></g><g transform="translate(1696.45,532.40)"><rect x="23.95" y="7.6" width="0.9" height="58.0" fill="#dcdcdc"/><rect x="42.95" y="7.6" width="0.9" height="58.0" fill="#dcdcdc"/><rect x="60.35" y="7.6" width="0.9" height="58.0" fill="#dcdcdc"/><rect x="79.35" y="7.6" width="0.9" height="58.0" fill="#dcdcdc"/><rect x="96.95" y="7.6" width="0.9" height="58.0" fill="#dcdcdc"/><path d="M47.1 12.6H60Q62 12.6 62 14.6V21.6Q62 23.6 60 23.6H47.1Z" fill="#db4437"/><rect x="7" y="12.6" width="40.40" height="11.00" fill="#5e97f6"/><path d="M51.1 32H83Q85 32 85 34V41Q85 43 83 43H51.1Z" fill="#db4437"/><rect x="7" y="32" width="44.40" height="11.00" fill="#5e97f6"/><path d="M36.7 49H54Q56 49 56 51V58.2Q56 60.2 54 60.2H36.7Z" fill="#db4437"/><rect x="7" y="49" width="30.00" height="11.20" fill="#5e97f6"/><rect x="6.20" y="7.6" width="1.6" height="58.0" fill="#333"/></g><g transform="translate(1836.50,532.40)"><rect x="28.75" y="7.6" width="0.9" height="58.0" fill="#dcdcdc"/><rect x="52.15" y="7.6" width="0.9" height="58.0" fill="#dcdcdc"/><rect x="75.15" y="7.6" width="0.9" height="58.0" fill="#dcdcdc"/><rect x="97.15" y="7.6" width="0.9" height="58.0" fill="#dcdcdc"/><path d="M79.3 12.6H95.6Q97.6 12.6 97.6 14.6V21.6Q97.6 23.6 95.6 23.6H79.3Z" fill="#f2a600"/><rect x="46.900000000000006" y="12.6" width="32.70" height="11.00" fill="#db4437"/><rect x="7.2" y="12.6" width="40.00" height="11.00" fill="#5e97f6"/><path d="M83.3 32H95.6Q97.6 32 97.6 34V41Q97.6 43 95.6 43H83.3Z" fill="#f2a600"/><rect x="61.7" y="32" width="21.90" height="11.00" fill="#db4437"/><rect x="7.2" y="32" width="54.80" height="11.00" fill="#5e97f6"/><path d="M71.7 49H95.6Q97.6 49 97.6 51V58.2Q97.6 60.2 95.6 60.2H71.7Z" fill="#f2a600"/><rect x="49.900000000000006" y="49" width="22.10" height="11.20" fill="#db4437"/><rect x="7.2" y="49" width="43.00" height="11.20" fill="#5e97f6"/><rect x="6.40" y="7.6" width="1.6" height="58.0" fill="#333"/></g><g transform="translate(1556.40,665.00)"><path d="M53 36.4L53.00 6.90A29.5 29.5 0 1 1 26.37 49.10Z" fill="#5e97f6"/><path d="M53 36.4L26.37 49.10A29.5 29.5 0 0 1 36.08 12.24Z" fill="#dc3912"/><path d="M53 36.4L36.08 12.24A29.5 29.5 0 0 1 53.00 6.90Z" fill="#ff9900"/></g><g transform="translate(1696.45,665.00)"><path d="M52.4 36.4L52.40 6.90A29.5 29.5 0 1 1 25.77 49.10Z" fill="#5e97f6"/><path d="M52.4 36.4L25.77 49.10A29.5 29.5 0 0 1 35.48 12.24Z" fill="#dc3912"/><path d="M52.4 36.4L35.48 12.24A29.5 29.5 0 0 1 52.40 6.90Z" fill="#ff9900"/><circle cx="52.4" cy="36.4" r="15" fill="#fff"/></g><g transform="translate(1836.50,665.00)"><path d="M22.9 34.3A29.3 20.7 0 0 0 81.500 34.300V38.800A29.300 20.700 0 0 1 22.900 38.800Z" fill="#3b64b5"/><path d="M52.2 34.3L52.20 13.60A29.3 20.7 0 1 1 25.75 43.21Z" fill="#5e97f6"/><path d="M52.2 34.3L25.75 43.21A29.3 20.7 0 0 1 35.39 17.34Z" fill="#dc3912"/><path d="M52.2 34.3L35.39 17.34A29.3 20.7 0 0 1 52.20 13.60Z" fill="#ff9900"/></g><g transform="translate(1556.40,797.60)"><clipPath id="sc1"><rect x="5" y="6.4" width="96" height="62"/></clipPath><g clip-path="url(#sc1)"><rect x="7.6" y="6.55" width="90.0" height="0.9" fill="#dcdcdc"/><rect x="7.6" y="25.95" width="90.0" height="0.9" fill="#dcdcdc"/><rect x="7.6" y="45.55" width="90.0" height="0.9" fill="#dcdcdc"/><rect x="21.55" y="7" width="0.9" height="58.8" fill="#dcdcdc"/><rect x="46.35" y="7" width="0.9" height="58.8" fill="#dcdcdc"/><rect x="71.15" y="7" width="0.9" height="58.8" fill="#dcdcdc"/><rect x="95.15" y="7" width="0.9" height="58.8" fill="#dcdcdc"/><circle cx="10" cy="7" r="2.8" fill="#5e97f6"/><circle cx="22" cy="21.8" r="2.8" fill="#5e97f6"/><circle cx="46.6" cy="32.6" r="2.8" fill="#5e97f6"/><circle cx="58.8" cy="25.8" r="2.8" fill="#5e97f6"/><circle cx="71.2" cy="38.6" r="2.8" fill="#5e97f6"/><circle cx="95.6" cy="32.6" r="2.8" fill="#5e97f6"/><circle cx="34.2" cy="48.2" r="2.8" fill="#5e97f6"/><circle cx="83.4" cy="55" r="2.8" fill="#5e97f6"/><circle cx="83.4" cy="7" r="2.8" fill="#db4437"/><circle cx="95.6" cy="7" r="2.8" fill="#db4437"/><circle cx="58.8" cy="18.6" r="2.8" fill="#db4437"/><circle cx="71.2" cy="28.6" r="2.8" fill="#db4437"/><circle cx="22" cy="44.4" r="2.8" fill="#db4437"/><circle cx="34.2" cy="53" r="2.8" fill="#db4437"/><circle cx="46.6" cy="51" r="2.8" fill="#db4437"/><circle cx="10" cy="61" r="2.8" fill="#db4437"/></g><rect x="7.6" y="65.10" width="90.0" height="1.4" fill="#222"/></g><g transform="translate(1696.45,797.60)"><rect x="7" y="6.55" width="90.6" height="0.9" fill="#e4e4e4"/><rect x="7" y="18.35" width="90.6" height="0.9" fill="#e4e4e4"/><rect x="7" y="30.15" width="90.6" height="0.9" fill="#e4e4e4"/><rect x="7" y="41.75" width="90.6" height="0.9" fill="#e4e4e4"/><rect x="7" y="53.35" width="90.6" height="0.9" fill="#e4e4e4"/><rect x="28.35" y="7" width="0.9" height="58.8" fill="#e4e4e4"/><rect x="50.55" y="7" width="0.9" height="58.8" fill="#e4e4e4"/><rect x="72.35" y="7" width="0.9" height="58.8" fill="#e4e4e4"/><rect x="93.95" y="7" width="0.9" height="58.8" fill="#e4e4e4"/><clipPath id="sc2"><rect x="5" y="4" width="96" height="61.8"/></clipPath><g clip-path="url(#sc2)"><circle cx="30" cy="13.8" r="7.4" fill="#5e97f6" fill-opacity=".85"/><circle cx="54.8" cy="11.4" r="5.600" fill="#5e97f6" fill-opacity=".85"/><circle cx="19" cy="47" r="11.200" fill="#db4437" fill-opacity=".8"/><circle cx="72.400" cy="61.400" r="22.400" fill="#5e97f6" fill-opacity=".85"/><circle cx="67" cy="39.800" r="5.600" fill="#db4437" fill-opacity=".8"/><circle cx="67" cy="59" r="4.400" fill="#db4437" fill-opacity=".8"/></g><rect x="6.45" y="7" width="1.1" height="58.8" fill="#555"/><rect x="7" y="65.25" width="90.6" height="1.1" fill="#555"/></g><g transform="translate(1556.40,929.80)"><rect x="4.500" y="4.200" width="97.200" height="60" fill="#e8f4fc"/><path d="M38 6Q44 3 50 8L47.500 18L43.500 29L40.500 27L38.500 20L39.500 12Z" fill="#f8fbf1"/><path d="M49 44L52 38L56 34L60 36L64 38L70 39L76 36L82 37L88 38L86 46L78 50L72 58L64 60L52 60Z" fill="#f1f5e0"/><path d="M52 12L56 10L57 14L53 15Z" fill="#f1f5e0"/><path d="M33.500 5L36.800 6.500L36 14L37.500 20L36 26L38.700 31L37 35.500L21 35.500L20.700 26L23 17L27 9Z" fill="#66b80e"/><path d="M30 16L31 15L31.500 18ZM33 24L34.500 23L34 27ZM27 22L28 21L28.500 24Z" fill="#e8f4fc"/><path d="M10 23.500Q14 20.500 19.200 23V32Q14 35.500 9.500 31.500Z" fill="#b3e68c"/><path d="M6.300 23L8.300 22.500L8.500 26.500L6.800 27Z" fill="#2f7d08"/><path d="M21 35.500H37L35.500 40L33 43L26 44L22 41Z" fill="#a4dc76"/><path d="M60 26L62 22L66 21L67 17L71 15L73 19L76 17L77 10L80 9L81 16L85 15L89 18L93 18L97 21L101.500 26L99 29L96 32L91 31L87 37L84 33L79 34L75 33L72 36L69 38.500L66 34L62 37L60 35Z" fill="#2d7a06"/><path d="M66 8.500L69.500 7.500L70 10L67 11ZM71.500 7.500L74 7L74.500 9.500L72 10Z" fill="#2d7a06"/><path d="M53 36L55 35L55.500 38.500L53.500 39Z" fill="#3d8f14"/></g><g transform="translate(1696.45,929.80)"><rect x="4.500" y="4.200" width="97.200" height="60" fill="#e8f4fc"/><path d="M28 8Q40 2 46 8L44 24Q42 34 36 30Q28 20 22 24Q24 12 28 8Z" fill="#f1f5e0"/><path d="M8 28Q14 22 20 26L18 36L10 34Z" fill="#f1f5e0"/><path d="M52 40L58 30L70 14L80 12L90 16L100 26L98 34L88 44L76 50L64 52L56 50Z" fill="#f1f5e0"/><ellipse cx="24.600" cy="31.500" rx="9.200" ry="10.600" fill="#66b81c"/><circle cx="27.600" cy="40.500" r="6" fill="#bdf092"/><ellipse cx="53.200" cy="36.700" rx="11.600" ry="13" fill="#3f9a12"/><circle cx="55.200" cy="34.800" r="3.800" fill="#dcf8c8"/><ellipse cx="79.900" cy="28.900" rx="13.400" ry="15.300" fill="#2c7a1a"/><ellipse cx="36" cy="55" rx="6" ry="4" fill="#7ccc2c"/></g></svg>
<svg style="left:0;top:0" width="1999" height="980" viewBox="0 0 1999 980"><defs><filter id="rough" x="-5%" y="-5%" width="110%" height="110%"><feTurbulence type="fractalNoise" baseFrequency="0.55" numOctaves="2" seed="4" result="n"/><feDisplacementMap in="SourceGraphic" in2="n" scale="2.6" xChannelSelector="R" yChannelSelector="G"/></filter></defs><g filter="url(#rough)"><path d="M1401.500 318.700L1524 317.700" stroke="#fb2a0d" stroke-width="4.800" stroke-linecap="round" fill="none"/><path d="M1401.500 318.700Q1500 360 1696 430.500" stroke="#fb2a0d" stroke-width="4.800" stroke-linecap="round" fill="none"/><path d="M1520 304.500L1544.500 317.800L1520.500 332Z" fill="#fb2a0d" stroke="#fb2a0d" stroke-width="1.500" stroke-linejoin="round"/><path d="M1697.500 416.500L1713.500 436L1686 442.800Z" fill="#fb2a0d" stroke="#fb2a0d" stroke-width="1.500" stroke-linejoin="round"/></g></svg>
</div></body></html>
